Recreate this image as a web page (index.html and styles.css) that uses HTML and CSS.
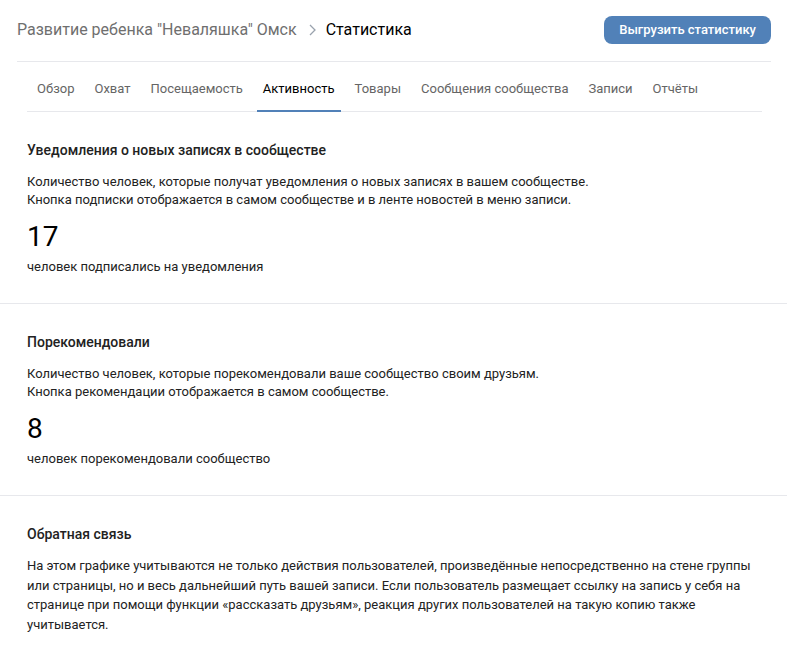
FILE: index.html
```html
<!DOCTYPE html>
<html lang="ru">
<head>
<meta charset="utf-8">
<link rel="stylesheet" href="styles.css">
</head>
<body>
<div class="page">
  <header class="header">
    <div class="crumbs">
      <span class="crumb-parent">Развитие ребенка "Неваляшка" Омск</span>
      <svg class="chev" width="7" height="12" viewBox="0 0 7 12"><path d="M1 1l5 5-5 5" fill="none" stroke="#99a2ad" stroke-width="1.3"/></svg>
      <span class="crumb-current">Статистика</span>
    </div>
    <button class="btn">Выгрузить статистику</button>
  </header>
  <nav class="tabs">
    <a class="tab">Обзор</a>
    <a class="tab">Охват</a>
    <a class="tab">Посещаемость</a>
    <a class="tab active">Активность</a>
    <a class="tab">Товары</a>
    <a class="tab">Сообщения сообщества</a>
    <a class="tab">Записи</a>
    <a class="tab">Отчёты</a>
  </nav>
  <section class="block">
    <h2 class="block-title">Уведомления о новых записях в сообществе</h2>
    <p class="desc">Количество человек, которые получат уведомления о новых записях в вашем сообществе.<br>Кнопка подписки отображается в самом сообществе и в ленте новостей в меню записи.</p>
    <div class="num">17</div>
    <div class="caption">человек подписались на уведомления</div>
  </section>
  <section class="block">
    <h2 class="block-title">Порекомендовали</h2>
    <p class="desc">Количество человек, которые порекомендовали ваше сообщество своим друзьям.<br>Кнопка рекомендации отображается в самом сообществе.</p>
    <div class="num">8</div>
    <div class="caption">человек порекомендовали сообщество</div>
  </section>
  <section class="block last">
    <h2 class="block-title">Обратная связь</h2>
    <p class="desc long">На этом графике учитываются не только действия пользователей, произведённые непосредственно на стене группы или страницы, но и весь дальнейший путь вашей записи. Если пользователь размещает ссылку на запись у себя на странице при помощи функции «рассказать друзьям», реакция других пользователей на такую копию также учитывается.</p>
  </section>
</div>
</body>
</html>
```

FILE: styles.css
```css
* { box-sizing: border-box; }
html, body { margin: 0; padding: 0; background: #fff; }
body {
  font-family: Roboto, "Liberation Sans", Arial, sans-serif;
  color: #000;
  font-size: 13px;
}
.page { width: 787px; }

.header {
  display: flex;
  align-items: center;
  justify-content: space-between;
  margin: 0 16px 0 17px;
  padding: 16px 0 17px;
  border-bottom: 1px solid #e7e8ec;
}
.crumbs {
  display: flex;
  align-items: center;
  font-size: 16px;
  line-height: 20px;
}
.crumb-parent { color: #6f6f6f; }
.chev { margin: 0 10px 0 12px; }
.crumb-current { color: #000; }
.btn {
  height: 28px;
  padding: 0 15px;
  border: 0;
  border-radius: 8px;
  background: #5181b8;
  color: #fff;
  font-family: inherit;
  font-size: 13px;
  font-weight: 500;
  line-height: 28px;
}

.tabs {
  display: flex;
  height: 50px;
  margin: 0 25px 0 27px;
  padding-left: 4px;
  border-bottom: 1px solid #e7e8ec;
}
.tab {
  display: flex;
  align-items: center;
  padding: 5px 6px 0;
  margin-right: 8px;
  color: #656565;
  font-size: 13px;
  margin-bottom: -1px;
  border-bottom: 2px solid transparent;
}
.tab.active {
  color: #000;
  border-bottom-color: #5181b8;
}

.block {
  padding: 29px 27px 27px;
  border-bottom: 1px solid #e7e8ec;
}
.block.last { border-bottom: 0; }
.block-title {
  margin: 0;
  font-size: 14px;
  font-weight: 500;
  line-height: 18px;
  color: #222;
}
.desc {
  margin: 14px 0 0;
  line-height: 18px;
  color: #222;
}
.desc.long { line-height: 19.5px; margin-top: 13px; }
.num {
  margin-top: 12px;
  font-size: 28px;
  line-height: 32px;
  color: #000;
}
.caption {
  margin-top: 5px;
  line-height: 18px;
  color: #222;
}
```
